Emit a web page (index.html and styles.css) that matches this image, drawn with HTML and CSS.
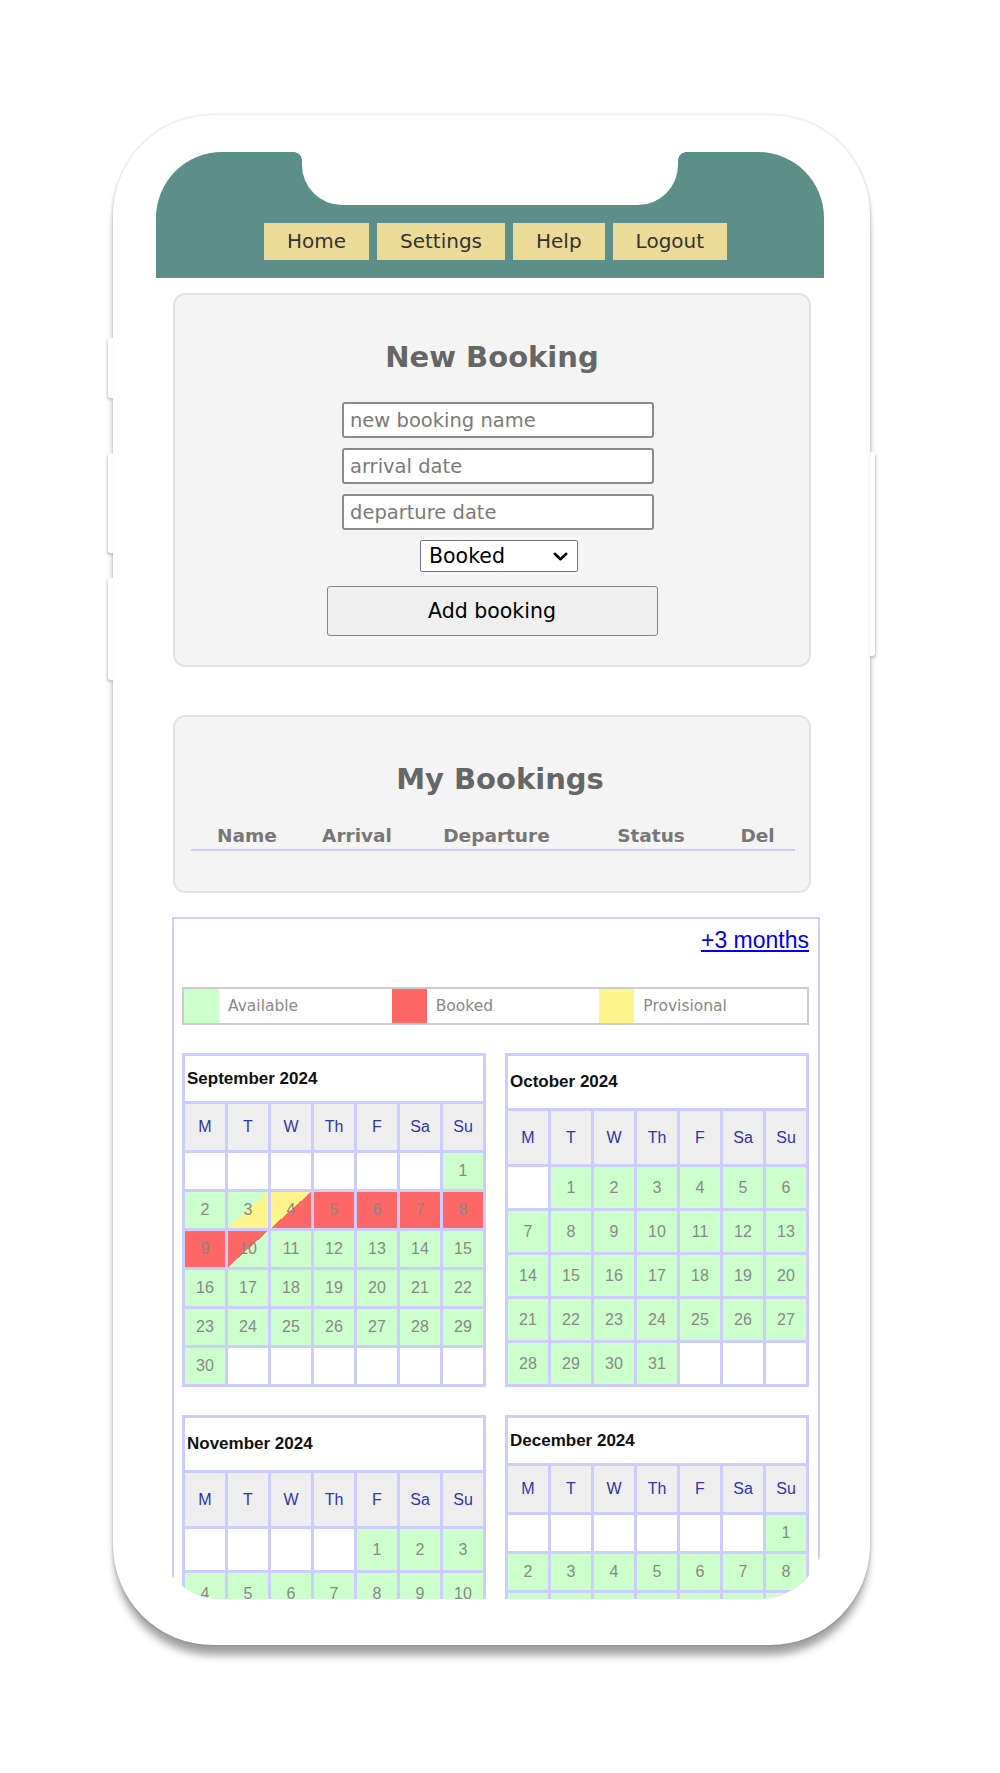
FILE: index.html
```html
<!DOCTYPE html>
<html lang="en">
<head>
<meta charset="utf-8">
<title>Bookings</title>
<link rel="stylesheet" href="styles.css">
</head>
<body>
<div class="phone">
  <span class="side-btn l1"></span>
  <span class="side-btn l2"></span>
  <span class="side-btn l3"></span>
  <span class="side-btn r1"></span>
  <div class="screen">
    <header class="topbar">
      <div class="notch"></div>
      <nav class="nav">
        <a class="nav-btn" href="#">Home</a>
        <a class="nav-btn" href="#">Settings</a>
        <a class="nav-btn" href="#">Help</a>
        <a class="nav-btn" href="#">Logout</a>
      </nav>
    </header>

    <section class="card new-booking">
      <h2 class="card-title">New Booking</h2>
      <form class="booking-form">
        <input class="field" type="text" placeholder="new booking name">
        <input class="field" type="text" placeholder="arrival date">
        <input class="field" type="text" placeholder="departure date">
        <div class="select-wrap">
          <select class="status">
            <option>Booked</option>
            <option>Provisional</option>
          </select>
          <svg class="chev" width="15" height="9" viewBox="0 0 15 9"><path d="M1.8 1.8 L7.5 7.2 L13.2 1.8" fill="none" stroke="#000" stroke-width="2.6" stroke-linecap="round" stroke-linejoin="round"/></svg>
        </div>
        <button class="add-btn" type="button">Add booking</button>
      </form>
    </section>

    <section class="card my-bookings">
      <h2 class="card-title">My Bookings</h2>
      <div class="bk-head">
        <span>Name</span>
        <span>Arrival</span>
        <span>Departure</span>
        <span>Status</span>
        <span>Del</span>
      </div>
    </section>

    <section class="calendar">
      <div class="cal-nav"><a class="more" href="#">+3 months</a></div>
      <div class="legend">
        <div class="lg-item"><span class="sw a"></span><span class="lg-text">Available</span></div>
        <div class="lg-item"><span class="sw b"></span><span class="lg-text">Booked</span></div>
        <div class="lg-item"><span class="sw p"></span><span class="lg-text">Provisional</span></div>
      </div>

      <div class="months">
        <table class="month r6">
          <tr><td class="mtitle" colspan="7">September 2024</td></tr>
          <tr class="dow"><td>M</td><td>T</td><td>W</td><td>Th</td><td>F</td><td>Sa</td><td>Su</td></tr>
          <tr><td></td><td></td><td></td><td></td><td></td><td></td><td class="a">1</td></tr>
          <tr><td class="a">2</td><td class="ap">3</td><td class="pb">4</td><td class="b">5</td><td class="b">6</td><td class="b">7</td><td class="b">8</td></tr>
          <tr><td class="b">9</td><td class="ba">10</td><td class="a">11</td><td class="a">12</td><td class="a">13</td><td class="a">14</td><td class="a">15</td></tr>
          <tr><td class="a">16</td><td class="a">17</td><td class="a">18</td><td class="a">19</td><td class="a">20</td><td class="a">21</td><td class="a">22</td></tr>
          <tr><td class="a">23</td><td class="a">24</td><td class="a">25</td><td class="a">26</td><td class="a">27</td><td class="a">28</td><td class="a">29</td></tr>
          <tr><td class="a">30</td><td></td><td></td><td></td><td></td><td></td><td></td></tr>
        </table>

        <table class="month r5">
          <tr><td class="mtitle" colspan="7">October 2024</td></tr>
          <tr class="dow"><td>M</td><td>T</td><td>W</td><td>Th</td><td>F</td><td>Sa</td><td>Su</td></tr>
          <tr><td></td><td class="a">1</td><td class="a">2</td><td class="a">3</td><td class="a">4</td><td class="a">5</td><td class="a">6</td></tr>
          <tr><td class="a">7</td><td class="a">8</td><td class="a">9</td><td class="a">10</td><td class="a">11</td><td class="a">12</td><td class="a">13</td></tr>
          <tr><td class="a">14</td><td class="a">15</td><td class="a">16</td><td class="a">17</td><td class="a">18</td><td class="a">19</td><td class="a">20</td></tr>
          <tr><td class="a">21</td><td class="a">22</td><td class="a">23</td><td class="a">24</td><td class="a">25</td><td class="a">26</td><td class="a">27</td></tr>
          <tr><td class="a">28</td><td class="a">29</td><td class="a">30</td><td class="a">31</td><td></td><td></td><td></td></tr>
        </table>

        <table class="month r5">
          <tr><td class="mtitle" colspan="7">November 2024</td></tr>
          <tr class="dow"><td>M</td><td>T</td><td>W</td><td>Th</td><td>F</td><td>Sa</td><td>Su</td></tr>
          <tr><td></td><td></td><td></td><td></td><td class="a">1</td><td class="a">2</td><td class="a">3</td></tr>
          <tr><td class="a">4</td><td class="a">5</td><td class="a">6</td><td class="a">7</td><td class="a">8</td><td class="a">9</td><td class="a">10</td></tr>
          <tr><td class="a">11</td><td class="a">12</td><td class="a">13</td><td class="a">14</td><td class="a">15</td><td class="a">16</td><td class="a">17</td></tr>
          <tr><td class="a">18</td><td class="a">19</td><td class="a">20</td><td class="a">21</td><td class="a">22</td><td class="a">23</td><td class="a">24</td></tr>
          <tr><td class="a">25</td><td class="a">26</td><td class="a">27</td><td class="a">28</td><td class="a">29</td><td class="a">30</td><td></td></tr>
        </table>

        <table class="month r6">
          <tr><td class="mtitle" colspan="7">December 2024</td></tr>
          <tr class="dow"><td>M</td><td>T</td><td>W</td><td>Th</td><td>F</td><td>Sa</td><td>Su</td></tr>
          <tr><td></td><td></td><td></td><td></td><td></td><td></td><td class="a">1</td></tr>
          <tr><td class="a">2</td><td class="a">3</td><td class="a">4</td><td class="a">5</td><td class="a">6</td><td class="a">7</td><td class="a">8</td></tr>
          <tr><td class="a">9</td><td class="a">10</td><td class="a">11</td><td class="a">12</td><td class="a">13</td><td class="a">14</td><td class="a">15</td></tr>
          <tr><td class="a">16</td><td class="a">17</td><td class="a">18</td><td class="a">19</td><td class="a">20</td><td class="a">21</td><td class="a">22</td></tr>
          <tr><td class="a">23</td><td class="a">24</td><td class="a">25</td><td class="a">26</td><td class="a">27</td><td class="a">28</td><td class="a">29</td></tr>
          <tr><td class="a">30</td><td class="a">31</td><td></td><td></td><td></td><td></td><td></td></tr>
        </table>
      </div>
    </section>
  </div>
</div>
</body>
</html>
```

FILE: styles.css
```css
html, body {
  margin: 0;
  padding: 0;
  background: #ffffff;
}

body {
  width: 1000px;
  min-height: 1773px;
  overflow: hidden;
}

/* ---------- phone frame ---------- */
.phone {
  position: relative;
  box-sizing: border-box;
  width: 757px;
  height: 1530px;
  margin: 115px 0 0 113px;
  padding: 37px 0 0 43px;
  background: #ffffff;
  border-radius: 100px;
  box-shadow: 0 12px 8px -2px rgba(0, 0, 0, 0.38), 0 0 3px rgba(0, 0, 0, 0.22);
}

.side-btn {
  position: absolute;
  width: 5px;
  background: #ffffff;
}
.side-btn.l1, .side-btn.l2, .side-btn.l3 {
  left: -5px;
  border-radius: 3px 0 0 3px;
  box-shadow: -1px 2px 3px rgba(0, 0, 0, 0.22);
}
.side-btn.l1 { top: 223px; height: 60px; }
.side-btn.l2 { top: 338px; height: 100px; }
.side-btn.l3 { top: 463px; height: 102px; }
.side-btn.r1 {
  right: -5px;
  top: 337px;
  height: 204px;
  border-radius: 0 3px 3px 0;
  box-shadow: 1px 2px 3px rgba(0, 0, 0, 0.22);
}

.screen {
  width: 668px;
  height: 1447px;
  overflow: hidden;
  border-radius: 66px 66px 65px 65px;
  background: #ffffff;
}

/* ---------- top bar ---------- */
.topbar {
  position: relative;
  box-sizing: border-box;
  height: 126px;
  padding: 0 0 18px 11px;
  background: #5d8f8a;
  display: flex;
  align-items: flex-end;
  justify-content: center;
}

.notch {
  position: absolute;
  top: 0;
  left: 146px;
  width: 376px;
  height: 53px;
  background: #ffffff;
  border-radius: 0 0 40px 40px;
}
.notch::before,
.notch::after {
  content: "";
  position: absolute;
  top: 0;
  width: 8px;
  height: 8px;
}
.notch::before {
  left: -8px;
  background: radial-gradient(circle at 0 100%, rgba(255, 255, 255, 0) 7.5px, #ffffff 8px);
}
.notch::after {
  right: -8px;
  background: radial-gradient(circle at 100% 100%, rgba(255, 255, 255, 0) 7.5px, #ffffff 8px);
}

.nav {
  display: flex;
  gap: 8px;
}

.nav-btn {
  display: block;
  height: 37px;
  padding: 0 23px;
  line-height: 37px;
  background: #ecdb98;
  color: #333333;
  font-family: "DejaVu Sans", Verdana, sans-serif;
  font-size: 20px;
  text-decoration: none;
}

/* ---------- cards ---------- */
.card {
  background: #f4f4f4;
  border: 2px solid #e2e2e2;
  border-radius: 12px;
  margin: 0 13px 0 17px;
}

.card-title {
  margin: 0;
  text-align: center;
  font-family: "DejaVu Sans", Verdana, sans-serif;
  font-weight: 700;
  font-size: 29px;
  line-height: 34px;
  color: #666666;
}

.new-booking {
  margin-top: 15px;
  padding: 45px 0 29px;
}

.booking-form {
  margin: 28px 0 0;
  display: flex;
  flex-direction: column;
  align-items: center;
}

.field {
  box-sizing: border-box;
  width: 312px;
  height: 36px;
  margin: 0 0 10px 12px;
  padding: 0 6px;
  border: 2px solid #8a8a8a;
  border-radius: 3px;
  background: #ffffff;
  font-family: "DejaVu Sans", Verdana, sans-serif;
  font-size: 19.5px;
  color: #222222;
}
.field::placeholder {
  color: #7a7a7a;
}

.select-wrap {
  position: relative;
  width: 158px;
  height: 32px;
  margin: 0 0 14px 14px;
}

.status {
  -webkit-appearance: none;
  appearance: none;
  box-sizing: border-box;
  width: 158px;
  height: 32px;
  padding: 0 0 0 8px;
  border: 1.5px solid #767676;
  border-radius: 2px;
  background: #ffffff;
  color: #000000;
  font-family: "DejaVu Sans", Verdana, sans-serif;
  font-size: 20.5px;
}

.chev {
  position: absolute;
  right: 10px;
  top: 12px;
  pointer-events: none;
}

.add-btn {
  box-sizing: border-box;
  width: 331px;
  height: 50px;
  border: 1.5px solid #858585;
  border-radius: 3px;
  background: #efefef;
  color: #000000;
  font-family: "DejaVu Sans", Verdana, sans-serif;
  font-size: 20.5px;
}

.my-bookings {
  margin-top: 48px;
  padding: 45px 0 40px 16px;
}

.bk-head {
  display: grid;
  grid-template-columns: 112px 108px 171px 138px 75px;
  width: 604px;
  margin-top: 29px;
  padding-bottom: 3px;
  border-bottom: 2px solid #ccccff;
  font-family: "DejaVu Sans", Verdana, sans-serif;
  font-weight: 700;
  font-size: 18.5px;
  line-height: 21px;
  color: #777777;
  text-align: center;
}

/* ---------- calendar ---------- */
.calendar {
  margin: 24px 4px 0 16px;
  padding: 8px 9px 40px 8px;
  border: 2px solid #ccccff;
}

.cal-nav {
  text-align: right;
  font-family: "Liberation Sans", Arial, sans-serif;
  font-size: 23px;
  line-height: 26px;
}

.more {
  color: #0000ee;
  text-decoration: underline;
}

.legend {
  box-sizing: border-box;
  height: 38px;
  margin-top: 34px;
  border: 2px solid #cccccc;
  display: grid;
  grid-template-columns: repeat(3, 1fr);
}

.lg-item {
  display: flex;
  align-items: stretch;
}

.sw {
  width: 35px;
  flex: none;
}
.sw.a { background: #ccffcc; }
.sw.b { background: #ff6666; }
.sw.p { background: #fff58a; }

.lg-text {
  padding-left: 9px;
  font-family: "DejaVu Sans", Verdana, sans-serif;
  font-size: 15.5px;
  line-height: 34px;
  color: #888888;
}

.months {
  margin-top: 28px;
  display: grid;
  grid-template-columns: 304px 304px;
  column-gap: 19px;
  row-gap: 28px;
  align-items: start;
}

.month {
  width: 304px;
  table-layout: fixed;
  border-collapse: separate;
  border-spacing: 3px;
  background: #ccccff;
  font-family: "Liberation Sans", Arial, sans-serif;
  font-size: 16px;
}

.month td {
  padding: 0;
  text-align: center;
  vertical-align: middle;
  background: #ffffff;
  color: #888888;
}

.month td.mtitle {
  text-align: left;
  padding-left: 2px;
  font-weight: 700;
  font-size: 17px;
  color: #111111;
}

.month .dow td {
  background: #eeeeee;
  color: #3333aa;
}

.r6 .mtitle { height: 45px; }
.r6 .dow td { height: 46px; }
.r6 td { height: 36px; }
.r5 .mtitle { height: 52px; }
.r5 .dow td { height: 53px; }
.r5 td { height: 41px; }

.month td.a { background: #ccffcc; }
.month td.b { background: #ff6666; }
.month td.p { background: #fff58a; }
.month td.ap { background: linear-gradient(to bottom right, #ccffcc 50%, #fff58a 50%); }
.month td.pb { background: linear-gradient(to bottom right, #fff58a 50%, #ff6666 50%); }
.month td.ba { background: linear-gradient(to bottom right, #ff6666 50%, #ccffcc 50%); }
```
